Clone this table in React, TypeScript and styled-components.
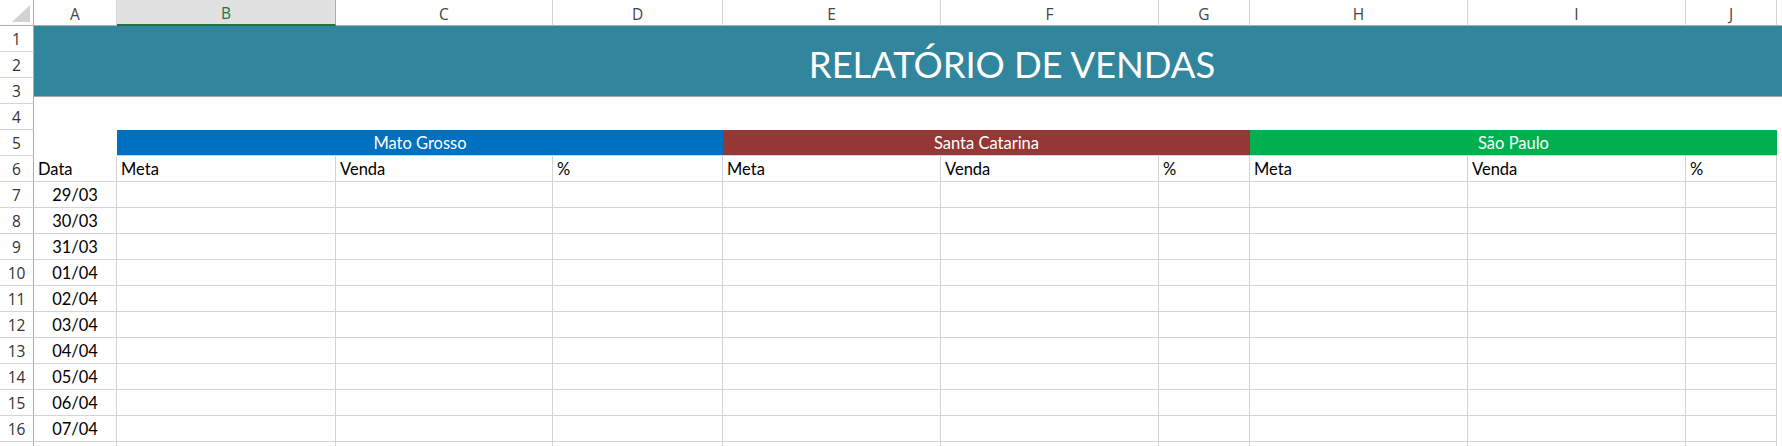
import { Fragment } from 'react';
import styled, { createGlobalStyle } from 'styled-components';

const GlobalStyle = createGlobalStyle`
  html, body {
    margin: 0;
    padding: 0;
    background: #fff;
    overflow: hidden;
  }
`;

const COLUMNS = ['A', 'B', 'C', 'D', 'E', 'F', 'G', 'H', 'I', 'J'];
const DATES = ['29/03', '30/03', '31/03', '01/04', '02/04', '03/04', '04/04', '05/04', '06/04', '07/04'];
const REGIONS = [
  { name: 'Mato Grosso', color: '#0070c0' },
  { name: 'Santa Catarina', color: '#953735' },
  { name: 'São Paulo', color: '#00b050' },
];
const SUBHEADS = ['Meta', 'Venda', '%'];

const Sheet = styled.div`
  display: grid;
  grid-template-columns: 34px 83px 219px 217px 170px 218px 218px 91px 218px 218px 91px 1fr;
  grid-auto-rows: 26px;
  width: 1782px;
  height: 446px;
  overflow: hidden;
  font-family: Lato, 'Liberation Sans', sans-serif;
`;

const Corner = styled.div`
  position: relative;
  box-sizing: border-box;
  border-right: 1px solid #ababab;
  border-bottom: 1px solid #ababab;
  svg {
    position: absolute;
    right: 3px;
    bottom: 3px;
  }
`;

const ColHeader = styled.div<{ $selected?: boolean }>`
  box-sizing: border-box;
  display: flex;
  align-items: center;
  justify-content: center;
  padding-top: 2px;
  background: ${(p) => (p.$selected ? '#e1e1e1' : '#fff')};
  border-right: 1px solid ${(p) => (p.$selected ? '#ababab' : '#d4d4d4')};
  border-bottom: ${(p) => (p.$selected ? '2px solid #217346' : '1px solid #ababab')};
  color: ${(p) => (p.$selected ? '#217346' : '#444')};
  font-family: 'Open Sans', 'Noto Sans', sans-serif;
  font-size: 15.5px;
`;

const HeaderFiller = styled.div`
  border-bottom: 1px solid #ababab;
`;

const RowHeader = styled.div`
  box-sizing: border-box;
  display: flex;
  align-items: center;
  justify-content: center;
  border-right: 1px solid #ababab;
  border-bottom: 1px solid #d4d4d4;
  color: #333;
  font-family: 'Open Sans', 'Noto Sans', sans-serif;
  font-size: 15.5px;
`;

const TitleArea = styled.div`
  grid-column: 2 / -1;
  grid-row: span 3;
  display: flex;
  flex-direction: column;
`;

const TitleBand = styled.div`
  box-sizing: border-box;
  height: 71px;
  background: #31859c;
  border-bottom: 1px solid #a6a6a6;
  display: flex;
  align-items: center;
  justify-content: center;
  padding: 5px 0 0 208px;
  color: #fff;
  font-size: 36.5px;
  letter-spacing: -0.1px;
`;

const Blank = styled.div<{ $span?: number }>`
  grid-column: ${(p) => (p.$span ? `span ${p.$span}` : 'auto')};
  background: #fff;
`;

const RegionBar = styled.div<{ $color: string }>`
  grid-column: span 3;
  box-sizing: border-box;
  background: ${(p) => p.$color};
  border-bottom: 1px solid #d4d4d4;
  display: flex;
  align-items: center;
  justify-content: center;
  color: #fff;
  font-size: 16.5px;
`;

const Cell = styled.div<{ $center?: boolean }>`
  box-sizing: border-box;
  border-right: 1px solid #d4d4d4;
  border-bottom: 1px solid #d4d4d4;
  padding: 1px 4px 0;
  line-height: 24px;
  text-align: ${(p) => (p.$center ? 'center' : 'left')};
  color: #000;
  font-size: 16.5px;
  white-space: nowrap;
  overflow: hidden;
`;

const Outside = styled.div`
  background: #fff;
`;

function EmptyCells() {
  return (
    <>
      {Array.from({ length: 9 }).map((_, i) => (
        <Cell key={i} />
      ))}
      <Outside />
    </>
  );
}

export default function App() {
  return (
    <>
      <GlobalStyle />
      <Sheet>
        <Corner>
          <svg width="18" height="17" viewBox="0 0 18 17">
            <polygon points="18,0 18,17 0,17" fill="#d2d2d2" />
          </svg>
        </Corner>
        {COLUMNS.map((c) => (
          <ColHeader key={c} $selected={c === 'B'}>
            {c}
          </ColHeader>
        ))}
        <HeaderFiller />

        <RowHeader>1</RowHeader>
        <TitleArea>
          <TitleBand>RELATÓRIO DE VENDAS</TitleBand>
        </TitleArea>
        <RowHeader>2</RowHeader>
        <RowHeader>3</RowHeader>

        <RowHeader>4</RowHeader>
        <Blank $span={11} />

        <RowHeader>5</RowHeader>
        <Blank />
        {REGIONS.map((r) => (
          <RegionBar key={r.name} $color={r.color}>
            {r.name}
          </RegionBar>
        ))}
        <Blank />

        <RowHeader>6</RowHeader>
        <Cell>Data</Cell>
        {REGIONS.map((r) =>
          SUBHEADS.map((s) => <Cell key={r.name + s}>{s}</Cell>)
        )}
        <Outside />

        {DATES.map((d, i) => (
          <Fragment key={d}>
            <RowHeader>{i + 7}</RowHeader>
            <Cell $center>{d}</Cell>
            <EmptyCells />
          </Fragment>
        ))}

        <RowHeader />
        <Cell />
        <EmptyCells />
      </Sheet>
    </>
  );
}
